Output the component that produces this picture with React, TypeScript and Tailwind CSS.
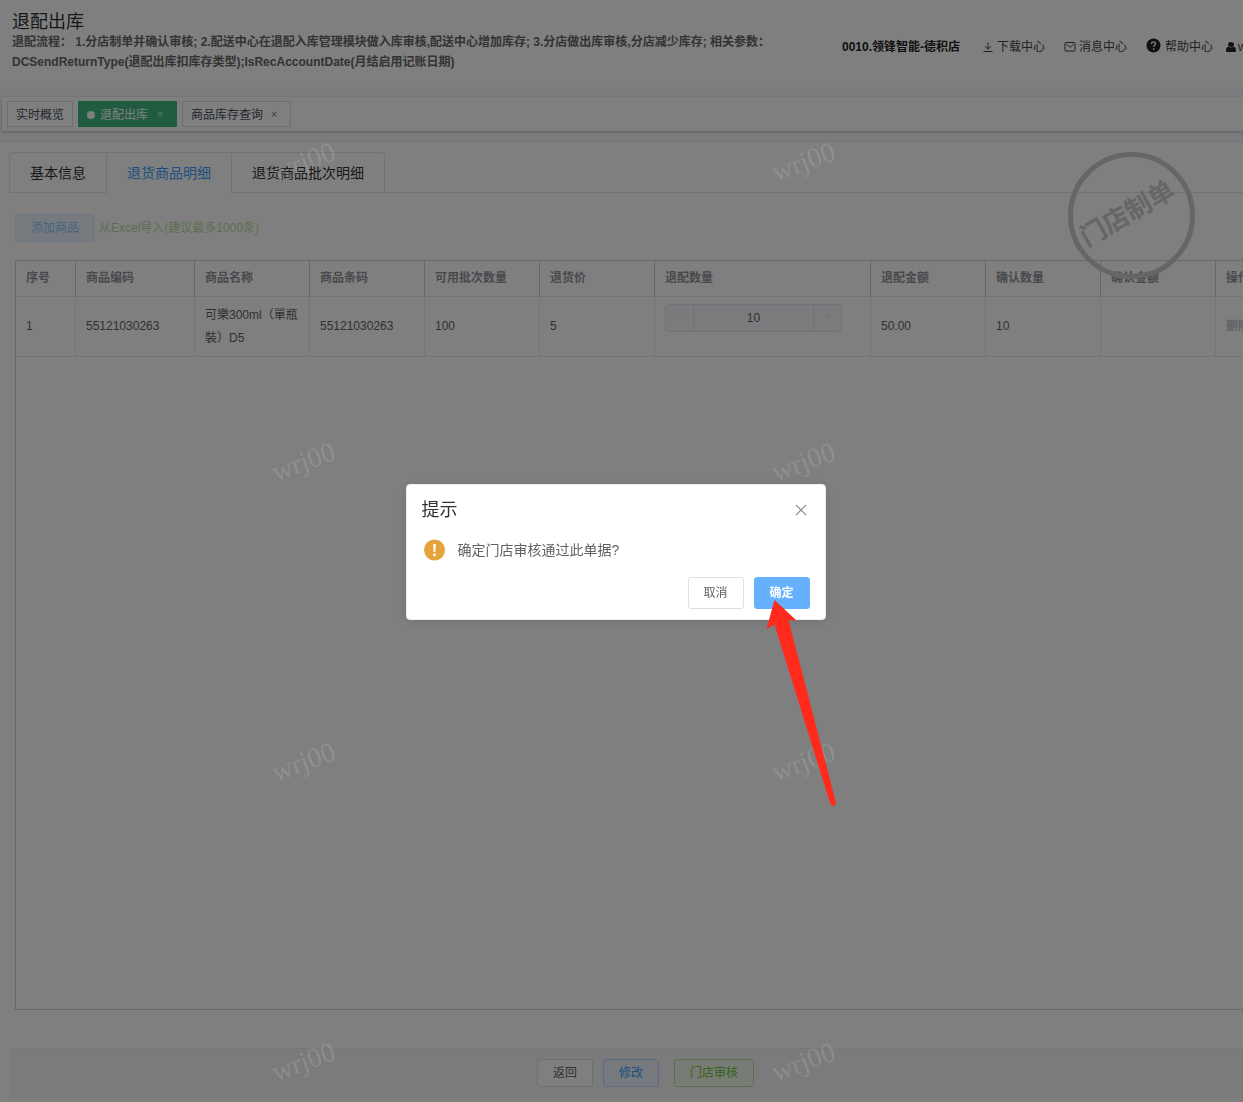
import { useState } from 'react';

interface Column {
  key: string;
  title: string;
  width: string;
}

interface Goods {
  index: number;
  code: string;
  name: string;
  barcode: string;
  available: number;
  price: number;
  quantity: number;
  amount: string;
  confirmed: number;
}

const TABS = ['基本信息', '退货商品明细', '退货商品批次明细'];

const COLUMNS: Column[] = [
  { key: 'index', title: '序号', width: 'w-[60px]' },
  { key: 'code', title: '商品编码', width: 'w-[119px]' },
  { key: 'name', title: '商品名称', width: 'w-[115px]' },
  { key: 'barcode', title: '商品条码', width: 'w-[115px]' },
  { key: 'available', title: '可用批次数量', width: 'w-[115px]' },
  { key: 'price', title: '退货价', width: 'w-[115px]' },
  { key: 'quantity', title: '退配数量', width: 'w-[216px]' },
  { key: 'amount', title: '退配金额', width: 'w-[115px]' },
  { key: 'confirmed', title: '确认数量', width: 'w-[115px]' },
  { key: 'confirmedAmount', title: '确认金额', width: 'w-[115px]' },
  { key: 'action', title: '操作', width: 'w-[80px]' },
];

const GOODS: Goods[] = [
  {
    index: 1,
    code: '55121030263',
    name: '可樂300ml（單瓶裝）D5',
    barcode: '55121030263',
    available: 100,
    price: 5,
    quantity: 10,
    amount: '50.00',
    confirmed: 10,
  },
];

function DownloadIcon() {
  return (
    <svg className="size-3" viewBox="0 0 12 12" fill="none" stroke="currentColor">
      <path d="M6 1.500v6.500M3 5.200l3 3 3-3M1.500 10.500h9" />
    </svg>
  );
}

function MailIcon() {
  return (
    <svg className="size-3" viewBox="0 0 12 12" fill="none" stroke="currentColor">
      <rect x="1" y="1.500" width="10" height="8.500" rx="1" />
      <path d="M2.500 3 6 6.500 9.500 3" />
    </svg>
  );
}

function HelpIcon() {
  return (
    <svg className="mb-1 size-[15px]" viewBox="0 0 16 16" fill="none">
      <circle cx="8" cy="8" r="7.500" fill="#222" />
      <path d="M5.800 6.300c0-1.300 1-2.100 2.200-2.100s2.200.8 2.200 1.900c0 1.500-2 1.500-2 3.100" stroke="#fff" strokeWidth="1.400" />
      <circle cx="8.200" cy="11.600" r="1" fill="#fff" />
    </svg>
  );
}

function UserIcon() {
  return (
    <svg className="size-[10px]" viewBox="0 0 10 12" preserveAspectRatio="none" fill="#222">
      <circle cx="5" cy="3" r="3" />
      <path d="M0 10.500C0 7.500 1 6 2.500 5.800c1.500 1.100 3.500 1.100 5 0C9 6 10 7.500 10 10.500c0 .9-.6 1.500-1.500 1.500h-7C.6 12 0 11.400 0 10.500z" />
    </svg>
  );
}

function PageHeader() {
  return (
    <header className="flex h-[87px] shrink-0 bg-white">
      <div className="min-w-0 flex-1 pt-3 pl-3">
        <h1 className="text-lg leading-5 text-[#303133]">退配出库</h1>
        <p className="max-w-[800px] text-xs leading-5 font-bold text-[#666]">
          退配流程： 1.分店制单并确认审核; 2.配送中心在退配入库管理模块做入库审核,配送中心增加库存;
          3.分店做出库审核,分店减少库存; 相关参数： DCSendReturnType(退配出库扣库存类型);IsRecAccountDate(月结启用记账日期)
        </p>
      </div>
      <div className="flex h-[94px] w-[401px] shrink-0 items-center overflow-hidden text-xs whitespace-nowrap text-[#444]">
        <strong className="w-[140px] shrink-0 text-[#222]">0010.领锋智能-德积店</strong>
        <a href="#download" className="flex w-[82px] shrink-0 items-center gap-[3px]">
          <DownloadIcon />
          下载中心
        </a>
        <a href="#message" className="flex w-[82px] shrink-0 items-center gap-[3px]">
          <MailIcon />
          消息中心
        </a>
        <a href="#help" className="flex w-20 shrink-0 items-center gap-1">
          <HelpIcon />
          帮助中心
        </a>
        <a href="#user" className="flex shrink-0 items-center gap-[2px]">
          <UserIcon />
          wrj00
        </a>
      </div>
    </header>
  );
}

function TagsBar() {
  return (
    <div className="shrink-0 bg-[#f5f7fb] pt-[10px] pb-[10px] pl-[2px]">
      <nav className="flex h-[34px] items-center gap-[5px] bg-white pl-[5px] text-xs text-[#495060] shadow-[0_1px_3px_rgba(0,0,0,0.25)]">
        <a href="#overview" className="flex h-[26px] items-center border border-[#d8dce5] px-2 pt-[2px]">
          实时概览
        </a>
        <div className="flex h-[26px] items-center border border-[#42b983] bg-[#42b983] px-2 pt-[2px] text-white">
          <span className="mr-[5px] size-2 rounded-full bg-white" />
          <a href="#return">退配出库</a>
          <button type="button" aria-label="关闭退配出库" className="ml-1 w-4 text-[10px] opacity-70">
            ×
          </button>
        </div>
        <div className="flex h-[26px] items-center border border-[#d8dce5] px-2 pt-[2px]">
          <a href="#stock">商品库存查询</a>
          <button type="button" aria-label="关闭商品库存查询" className="ml-[3px] w-4 text-[10px] opacity-80">
            ×
          </button>
        </div>
      </nav>
    </div>
  );
}

function DetailTabs({ active, onChange }: { active: string; onChange: (tab: string) => void }) {
  return (
    <div role="tablist" className="flex h-[41px] shrink-0">
      {TABS.map((tab, i) => (
        <button
          key={tab}
          type="button"
          role="tab"
          aria-selected={tab === active}
          onClick={() => onChange(tab)}
          className={`border-t border-r border-[#dfe4ed] px-5 text-sm ${i === 0 ? 'rounded-tl border-l' : ''} ${
            i === TABS.length - 1 ? 'rounded-tr' : ''
          } ${tab === active ? 'text-[#409eff]' : 'border-b text-[#303133]'}`}
        >
          {tab}
        </button>
      ))}
      <div className="flex-1 border-b border-[#dfe4ed]" />
    </div>
  );
}

function QuantityInput({ value }: { value: number }) {
  return (
    <div className="mb-[18px] flex h-7 w-[177px] overflow-hidden rounded border border-[#e4e7ed] bg-[#f5f7fa]">
      <button type="button" disabled aria-label="减少" className="w-7 border-r border-[#e4e7ed] text-[#e4e7ed]">
        −
      </button>
      <input
        type="text"
        disabled
        aria-label="退配数量"
        value={value}
        readOnly
        className="min-w-0 flex-1 text-center text-xs text-[#606266]"
      />
      <button type="button" disabled aria-label="增加" className="w-7 border-l border-[#e4e7ed] text-[#e4e7ed]">
        +
      </button>
    </div>
  );
}

function GoodsTable() {
  const cell = 'border-r border-b border-[#e6e9f2] px-[10px]';

  return (
    <div className="mt-[18px] flex-1 overflow-hidden border-t border-b border-l border-[#d2d2d2]">
      <table className="w-[1280px] table-fixed border-separate border-spacing-0 text-left text-xs leading-[23px] text-[#606266]">
        <thead>
          <tr className="h-9">
            {COLUMNS.map((col) => (
              <th
                key={col.key}
                className={`${col.width} border-r border-b border-r-[#ccc] border-b-[#e6e9f2] px-[10px] font-bold text-[#909399]`}
              >
                {col.title}
              </th>
            ))}
          </tr>
        </thead>
        <tbody>
          {GOODS.map((row) => (
            <tr key={row.index} className="h-[60px]">
              <td className={cell}>{row.index}</td>
              <td className={cell}>{row.code}</td>
              <td className={cell}>{row.name}</td>
              <td className={cell}>{row.barcode}</td>
              <td className={cell}>{row.available}</td>
              <td className={cell}>{row.price}</td>
              <td className={cell}>
                <QuantityInput value={row.quantity} />
              </td>
              <td className={cell}>{row.amount}</td>
              <td className={cell}>{row.confirmed}</td>
              <td className={cell} />
              <td className={cell}>
                <button type="button" disabled className="font-bold text-[#c0c4cc]">
                  删除
                </button>
              </td>
            </tr>
          ))}
        </tbody>
      </table>
    </div>
  );
}

function Stamp() {
  return (
    <div className="absolute top-[10px] right-12 flex size-[127px] items-center justify-center rounded-full border-5 border-[#ccc]">
      <span className="-rotate-30 pr-1 pb-2 text-[26px] leading-none font-bold whitespace-nowrap text-[#ccc]">门店制单</span>
    </div>
  );
}

function Watermark() {
  return (
    <div
      aria-hidden="true"
      className="pointer-events-none fixed inset-0 grid auto-rows-[300px] grid-cols-[500px_500px] overflow-hidden pt-3 pl-[54px]"
    >
      {Array.from({ length: 8 }, (_, i) => (
        <span
          key={i}
          className="-rotate-[20deg] place-self-center font-['Liberation_Serif',serif] text-[28px] leading-none text-white/12"
        >
          wrj00
        </span>
      ))}
    </div>
  );
}

function Arrow() {
  return (
    <svg className="pointer-events-none absolute top-[114px] left-[358px] h-[208px] w-[72px]" viewBox="0 0 72 208" fill="#ff2a1c">
      <path d="M9.500 1 31.500 21.500 23.500 21 70.500 202c1 5-3.500 7-5.500 2L9.500 25.500 1.500 30z" />
    </svg>
  );
}

function ConfirmDialog() {
  return (
    <div className="fixed inset-0 flex items-center justify-center pt-[2px] pr-3">
      <div
        role="alertdialog"
        aria-labelledby="confirm-title"
        className="relative w-[420px] rounded border border-[#ebeef5] bg-white pb-[10px] shadow-[0_2px_12px_rgba(0,0,0,0.1)]"
      >
        <div className="flex items-center justify-between px-[15px] pt-4 pb-[9px]">
          <h2 id="confirm-title" className="text-lg leading-[18px] text-[#303133]">
            提示
          </h2>
          <button type="button" aria-label="关闭" className="mr-[3px] text-[#909399]">
            <svg className="size-3" viewBox="0 0 12 12" fill="none" stroke="currentColor" strokeWidth="1.200">
              <path d="m1 1 10 10M11 1 1 11" />
            </svg>
          </button>
        </div>
        <div className="flex items-center gap-3 py-[10px] pr-[15px] pl-[17px]">
          <svg className="size-[22px]" viewBox="0 0 22 22">
            <circle cx="10.500" cy="11" r="10.500" fill="#e6a23c" />
            <path d="M9.200 5h2.600l-.4 8H9.600z" fill="#fff" />
            <circle cx="10.500" cy="16" r="1.400" fill="#fff" />
          </svg>
          <p className="text-sm leading-6 text-[#606266]">确定门店审核通过此单据?</p>
        </div>
        <div className="flex justify-end gap-[10px] px-[15px] pt-[5px]">
          <button type="button" className="h-8 w-14 rounded-[3px] border border-[#dcdfe6] text-xs text-[#606266]">
            取消
          </button>
          <button type="button" className="h-8 w-14 rounded-[3px] border border-[#66b1ff] bg-[#66b1ff] text-xs font-bold text-white">
            确定
          </button>
        </div>
        <Arrow />
      </div>
    </div>
  );
}

export default function App() {
  const [activeTab, setActiveTab] = useState('退货商品明细');

  return (
    <div className="flex min-h-screen flex-col overflow-hidden bg-white font-['Liberation_Sans','Noto_Sans_CJK_SC',sans-serif]">
      <PageHeader />
      <TagsBar />
      <main className="relative flex flex-1 flex-col border-t border-[#e8e8e8] pt-[10px] pb-[5px] pl-[9px]">
        <DetailTabs active={activeTab} onChange={setActiveTab} />
        <div className="flex flex-1 flex-col pt-[21px] pb-[38px] pl-[6px]">
          <div className="flex items-center gap-1 text-xs">
            <button type="button" disabled className="h-7 rounded-[3px] border border-[#d9ecff] bg-[#ecf5ff] px-[15px] text-[#8cc5ff]">
              添加商品
            </button>
            <button type="button" disabled className="text-[#b3e19d]">
              从Excel导入(建议最多1000条)
            </button>
          </div>
          <GoodsTable />
        </div>
        <footer className="flex h-[49px] shrink-0 items-center justify-center border-t border-[#f0f0f0] bg-[#f7f7f7] pl-[39px] text-xs">
          <button type="button" className="h-7 rounded-[3px] border border-[#dcdfe6] bg-white px-[15px] text-[#606266]">
            返回
          </button>
          <button type="button" className="ml-[10px] h-7 rounded-[3px] border border-[#b3d8ff] bg-[#ecf5ff] px-[15px] text-[#409eff]">
            修改
          </button>
          <button type="button" className="ml-[15px] h-7 rounded-[3px] border border-[#b3e19d] bg-[#f0f9eb] px-[15px] text-[#67c23a]">
            门店审核
          </button>
        </footer>
        <Stamp />
      </main>

      <div className="fixed inset-0 bg-black/50" />
      <Watermark />
      <ConfirmDialog />
    </div>
  );
}
